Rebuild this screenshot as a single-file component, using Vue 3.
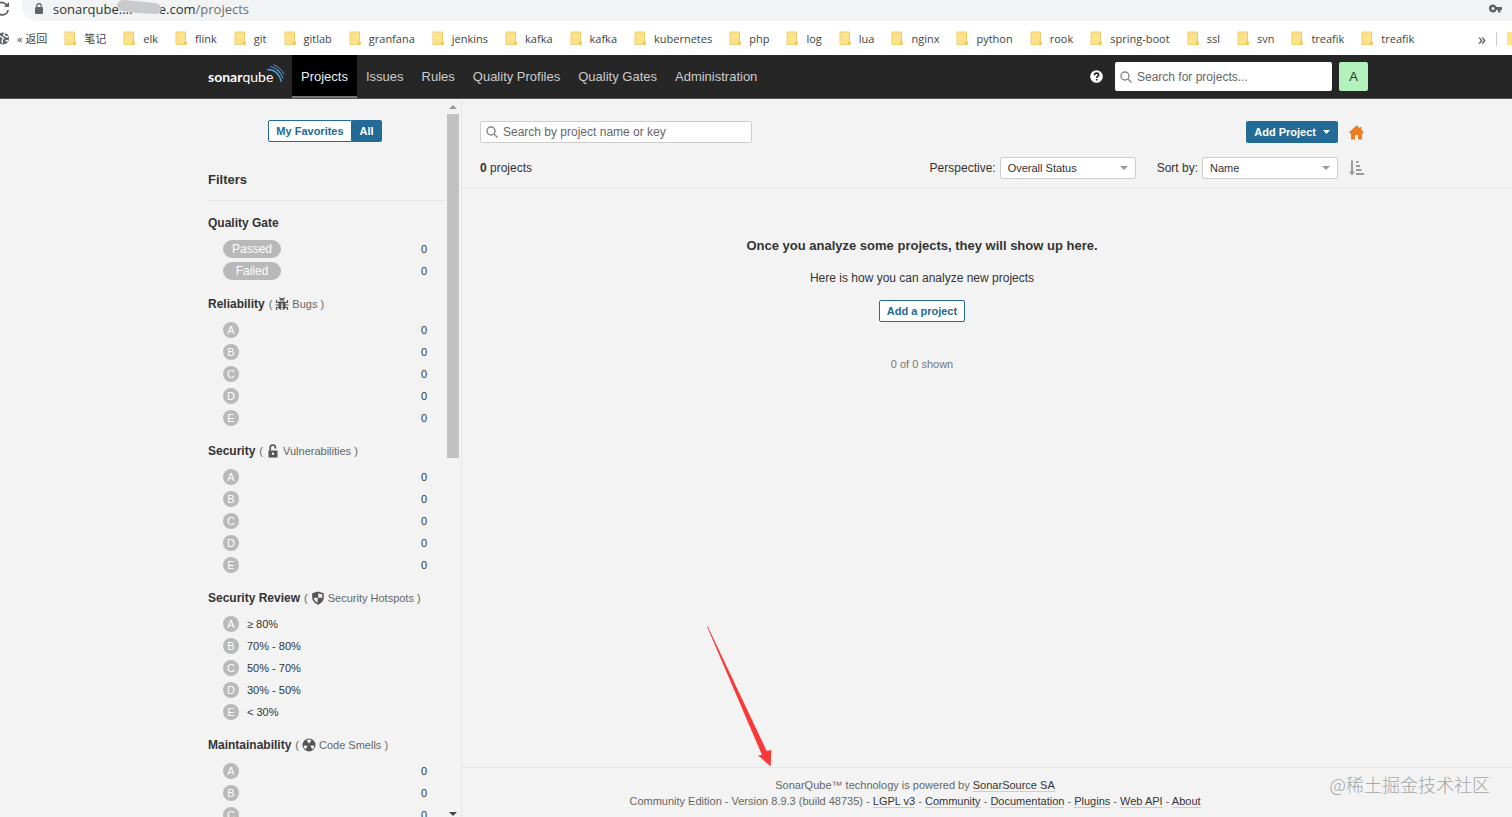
<script setup>
const bookmarks = [
  '笔记', 'elk', 'flink', 'git', 'gitlab', 'granfana', 'jenkins', 'kafka', 'kafka', 'kubernetes',
  'php', 'log', 'lua', 'nginx', 'python', 'rook', 'spring-boot', 'ssl', 'svn', 'treafik', 'treafik',
]
const tabs = ['Projects', 'Issues', 'Rules', 'Quality Profiles', 'Quality Gates', 'Administration']
const grades = ['A', 'B', 'C', 'D', 'E']
const counted = grades.map((grade) => ({ grade, text: '', count: '0' }))
const ranges = ['≥ 80%', '70% - 80%', '50% - 70%', '30% - 50%', '< 30%']
const facets = [
  { title: 'Reliability', icon: 'bug', metric: 'Bugs', rows: counted },
  { title: 'Security', icon: 'lock', metric: 'Vulnerabilities', rows: counted },
  {
    title: 'Security Review', icon: 'shield', metric: 'Security Hotspots',
    rows: grades.map((grade, i) => ({ grade, text: ranges[i], count: '' })),
  },
  { title: 'Maintainability', icon: 'smell', metric: 'Code Smells', rows: counted },
]
const footerLinks = ['LGPL v3', 'Community', 'Documentation', 'Plugins', 'Web API', 'About']
</script>

<template>
  <div class="window">
    <div class="address-bar">
      <svg class="reload" width="12" height="16" viewBox="0 0 12 16" fill="none" stroke="#5f6368" stroke-width="1.800">
        <path d="M-2 4A5.500 5.500 0 0 1 7 6M8 10A5.500 5.500 0 0 1-2 12.500" />
        <path d="M9 2v5H4z" fill="#5f6368" stroke="none" />
      </svg>
      <div class="url">
        <svg width="8" height="11" viewBox="0 0 8 11">
          <path d="M1.800 4V2.900a2.200 2.200 0 0 1 4.400 0V4" fill="none" stroke="#5f6368" stroke-width="1.200" />
          <rect y="4" width="8" height="7" rx="1" fill="#5f6368" />
        </svg>
        <span class="host">sonarqube<span class="hidden-part">....<svg class="smudge" width="46" height="16" viewBox="0 0 46 16"><path d="M0 5Q1 0 8 0L38 3Q44 4 44 9T38 14L20 13L5 11Q0 10 0 5z" fill="#c9cacb" /></svg></span>e.com<span class="path">/projects</span></span>
        <svg class="key" width="13" height="9" viewBox="0 0 13 9">
          <path d="M4 .5a4 4 0 1 0 3.600 5.500H9v2.500h2.500V6H13V3H7.600A4 4 0 0 0 4 .5zM4 3a1.500 1.500 0 1 1 0 3 1.500 1.500 0 0 1 0-3z" fill="#5f6368" fill-rule="evenodd" />
        </svg>
      </div>
    </div>

    <div class="bookmarks">
      <svg class="globe" width="9" height="13" viewBox="0 0 9 13">
        <circle cx="3" cy="6.500" r="6" fill="#5f6368" />
        <path d="M-1 3.500L1.500 5l2 1.500-1.500 2 .5 3M5 1L3.500 3l2 1.500L8 5M5.500 8.500L8 9" fill="none" stroke="#fff" stroke-width="1.300" />
      </svg>
      <a href="#" class="back">« 返回</a>
      <a v-for="(name, i) in bookmarks" :key="i" href="#" class="bookmark">
        <svg width="12" height="14" viewBox="0 0 12 14">
          <path d="M1 1h9.500v9l1 1v2.500H1z" fill="#fde28c" stroke="#f0cd6c" />
          <path d="M9 10.500h2V13H9z" fill="#f5c84c" />
        </svg>
        {{ name }}
      </a>
      <span class="more">»</span>
      <span class="divider"></span>
      <span class="cut-folder"></span>
    </div>

    <header class="navbar">
      <a href="#" class="logo"><b>sonar</b>qube
        <svg width="18" height="20" viewBox="0 0 18 20" fill="none" stroke="#4b9fd5">
          <path d="M0 5.500Q11 5 14.500 18" stroke-width="1.300" />
          <path d="M3 2.500Q12 3.500 16 14.500" stroke-width="1.100" />
          <path d="M6.500 .8Q13.500 3 17 10.500" stroke-width="1" />
        </svg>
      </a>
      <nav>
        <a v-for="(tab, i) in tabs" :key="tab" href="#" :class="{ active: i === 0 }">{{ tab }}</a>
      </nav>
      <button class="help" aria-label="Help">
        <svg width="13" height="13" viewBox="0 0 13 13">
          <circle cx="6.500" cy="6.500" r="6.300" fill="#fff" />
          <path d="M4.500 5.200c0-2.800 4.200-2.800 4.200-.3 0 1.500-2 1.400-2 3M6.700 9v1.600" fill="none" stroke="#222" stroke-width="1.700" />
        </svg>
      </button>
      <label class="search global">
        <svg width="12" height="12" viewBox="0 0 12 12" fill="none" stroke="#888" stroke-width="1.400"><circle cx="5" cy="5" r="4" /><path d="M8 8l3.500 3.500" /></svg>
        <input type="text" placeholder="Search for projects..." aria-label="Search for projects" />
      </label>
      <button class="avatar">A</button>
    </header>

    <div class="content">
      <aside class="sidebar">
        <div class="filters">
          <div class="toggle">
            <button>My Favorites</button><button class="on">All</button>
          </div>
          <h2>Filters</h2>
          <section class="facet">
            <h3>Quality Gate</h3>
            <ul>
              <li><span class="pill">Passed</span><span class="count">0</span></li>
              <li><span class="pill">Failed</span><span class="count">0</span></li>
            </ul>
          </section>
          <section v-for="facet in facets" :key="facet.title" class="facet">
            <h3>
              {{ facet.title }}
              <span class="metric">(
                <svg width="14" height="14" viewBox="0 0 14 14">
                  <g v-if="facet.icon === 'bug'">
                    <path d="M4.500 3.500a2.500 2.500 0 0 1 5 0z" fill="#555" />
                    <path d="M3.500 4.500h7V9a3.500 3.500 0 0 1-3 4V6.500h-1V13a3.500 3.500 0 0 1-3-4z" fill="#555" />
                    <path d="M4.500 .5l1.200 1.500M9.500 .5L8.300 2M1.500 3v2.500h11V3M.5 8h13M1.500 13v-2.500h11V13" fill="none" stroke="#555" stroke-width="1.200" />
                    <path d="M6.500 6.500h1V13h-1z" fill="#f3f3f3" />
                  </g>
                  <g v-else-if="facet.icon === 'lock'">
                    <path d="M4.200 6.500V3.600a2.600 2.600 0 0 1 5.200 0v.9" fill="none" stroke="#555" stroke-width="1.700" />
                    <path d="M2.500 6.500h9v7h-9zM7 8.500a1.300 1.300 0 1 0 .01 2.600A1.300 1.300 0 0 0 7 8.500z" fill="#555" fill-rule="evenodd" />
                  </g>
                  <g v-else-if="facet.icon === 'shield'">
                    <path d="M7 .5l5.800 1.700v4.300c0 3.500-3 6-5.800 7.200C4.200 12.500 1.200 10 1.200 6.500V2.200z" fill="#555" />
                    <path d="M7.300 2.300l4 1.100v3.400h-4zM6.700 6.800v5C4.500 10.700 3 9 2.800 6.800z" fill="#f3f3f3" />
                  </g>
                  <g v-else>
                    <circle cx="7" cy="7" r="6.500" fill="#555" />
                    <path d="M7 5.700L4.600 2.200a5 5 0 0 1 4.800 0zM5.800 7.700l-2.200 3.700A5 5 0 0 1 1.700 7.500zM8.200 7.700l2.200 3.700a5 5 0 0 0 1.900-3.900z" fill="#f3f3f3" />
                    <circle cx="7" cy="7" r="1.500" fill="#555" />
                  </g>
                </svg>
                {{ facet.metric }} )</span>
            </h3>
            <ul>
              <li v-for="row in facet.rows" :key="row.grade">
                <span class="grade">{{ row.grade }}</span>
                <span class="range">{{ row.text }}</span>
                <span class="count">{{ row.count }}</span>
              </li>
            </ul>
          </section>
        </div>
        <div class="scrollbar">
          <svg width="8" height="4" viewBox="0 0 8 4"><path d="M0 4l4-4 4 4z" fill="#999" /></svg>
          <div class="track"><div class="thumb"></div></div>
          <svg width="8" height="4" viewBox="0 0 8 4"><path d="M0 0l4 4 4-4z" fill="#444" /></svg>
        </div>
      </aside>

      <main>
        <div class="toolbar">
          <div class="line">
            <label class="search local">
              <svg width="12" height="12" viewBox="0 0 12 12" fill="none" stroke="#888" stroke-width="1.500"><circle cx="5" cy="5" r="4" /><path d="M8 8l3.500 3.500" /></svg>
              <input type="text" placeholder="Search by project name or key" aria-label="Search by project name or key" />
            </label>
            <button class="primary">Add Project
              <svg width="7" height="4" viewBox="0 0 7 4"><path d="M0 0h7L3.500 4z" fill="#fff" /></svg>
            </button>
            <button class="icon" aria-label="Homepage">
              <svg width="15" height="15" viewBox="0 0 15 15"><path d="M7.500 .3L10.800 3.300V2h1.600v2.800L15 7.500l-.8 1H13V14.500H9V10H6v4.500H2v-6H.8L0 7.500z" fill="#ed7d20" /></svg>
            </button>
          </div>
          <div class="line">
            <span class="total"><b>0</b> projects</span>
            <label for="perspective">Perspective:</label>
            <span class="select">
              <select id="perspective"><option>Overall Status</option></select>
              <svg width="8" height="4" viewBox="0 0 8 4"><path d="M0 0h8L4 4z" fill="#999" /></svg>
            </span>
            <label for="sort" class="sort-label">Sort by:</label>
            <span class="select">
              <select id="sort"><option>Name</option></select>
              <svg width="8" height="4" viewBox="0 0 8 4"><path d="M0 0h8L4 4z" fill="#999" /></svg>
            </span>
            <button class="icon" aria-label="Sort direction">
              <svg width="15" height="16" viewBox="0 0 15 16" fill="none" stroke="#999" stroke-width="2">
                <path d="M3 .5V13M7 2h2.500M7 6h4M7 10h5.500M7 14h8" /><path d="M0 11.500h6L3 15.500z" fill="#999" stroke="none" />
              </svg>
            </button>
          </div>
        </div>

        <div class="empty">
          <h1>Once you analyze some projects, they will show up here.</h1>
          <p>Here is how you can analyze new projects</p>
          <button class="outline">Add a project</button>
          <p class="shown">0 of 0 shown</p>
        </div>

        <footer>
          <svg class="arrow" width="65" height="142" viewBox="0 0 65 142"><path d="M0 .5L.8 .5 59.700 125l4.600-1-.6 16.500L51 129.300l4-.3z" fill="#fb3838" /></svg>
          <div>SonarQube™ technology is powered by <a href="#">SonarSource SA</a></div>
          <div>Community Edition - Version 8.9.3 (build 48735)<template v-for="link in footerLinks" :key="link"> - <a href="#">{{ link }}</a></template></div>
          <span class="watermark">@稀土掘金技术社区</span>
        </footer>
      </main>
    </div>
  </div>
</template>

<style>
body {
  margin: 0;
  overflow: hidden;
}
</style>

<style scoped>
* {
  box-sizing: border-box;
}
.window {
  display: flex;
  flex-direction: column;
  height: 100vh;
  background: #f3f3f3;
  color: #333;
  font: 12px/16px "Liberation Sans", Arial, sans-serif;
}
svg {
  display: block;
  flex: none;
}
a {
  color: inherit;
  text-decoration: none;
}
button,
input,
select {
  margin: 0;
  padding: 0;
  border: 0;
  background: none;
  color: inherit;
  font: inherit;
}
h1,
h2,
h3,
p,
ul {
  margin: 0;
  padding: 0;
  list-style: none;
}

.address-bar {
  display: flex;
  flex: none;
  height: 21px;
  background: #fff;
}
.url {
  display: flex;
  flex: 1;
  align-items: center;
  margin-left: 10px;
  padding: 0 10px 4px 13px;
  border-radius: 0 0 0 16px;
  background: #f1f3f4;
  color: #303134;
  font: 13px/16px "Open Sans", "Noto Sans", sans-serif;
}
.host {
  flex: 1;
  margin-left: 10px;
}
.hidden-part {
  display: inline-block;
  position: relative;
  width: 40px;
}
.smudge {
  position: absolute;
  left: -2px;
  top: -1px;
}
.path {
  color: #6b6f73;
}

.bookmarks {
  display: flex;
  flex: none;
  align-items: center;
  height: 34px;
  padding-top: 1px;
  background: #fff;
  color: #444;
  font: 11px/16px "Open Sans", "Noto Sans CJK SC", sans-serif;
  white-space: nowrap;
}
.back {
  margin-left: 8px;
}
.bookmark {
  display: flex;
  gap: 8px;
  margin-left: 17px;
}
.more {
  margin-left: auto;
  font-size: 16px;
}
.divider {
  width: 1px;
  height: 14px;
  margin: 0 10px;
  background: #ccc;
}
.cut-folder {
  width: 5px;
  height: 13px;
  background: #fde28c;
}

.navbar {
  display: flex;
  flex: none;
  align-items: center;
  height: 44px;
  padding: 0 144px 0 208px;
  border-bottom: 1px solid #555;
  background: #262626;
}
.logo {
  display: flex;
  align-items: center;
  width: 84px;
  color: #fff;
  font: 14px/20px Lato, sans-serif;
}
.logo svg {
  margin: -6px 0 0 -6px;
}
nav {
  display: flex;
  flex: 1;
  align-self: stretch;
}
nav a {
  padding: 0 9px;
  color: #ccc;
  font-size: 13px;
  line-height: 43px;
  white-space: nowrap;
}
nav .active {
  border-bottom: 2px solid #777;
  background: #000;
  color: #eee;
}
.help {
  margin-right: 12px;
}
.search {
  display: flex;
  align-items: center;
  gap: 5px;
  border-radius: 2px;
  background: #fff;
}
.search input {
  flex: 1;
  min-width: 0;
  outline: 0;
}
.search input::placeholder {
  color: #666;
  opacity: 1;
}
.global {
  width: 217px;
  height: 29px;
  padding: 0 5px;
}
.avatar {
  width: 29px;
  height: 29px;
  margin-left: 7px;
  border-radius: 2px;
  background: #b1f2bd;
  font-size: 13px;
}

.content {
  display: flex;
  flex: 1;
  min-height: 0;
}
.sidebar {
  display: flex;
  flex: none;
  width: 462px;
  padding-left: 208px;
  border-right: 1px solid #e6e6e6;
}
.filters {
  flex: 1;
  min-width: 0;
  overflow: hidden;
}
.toggle {
  display: flex;
  justify-content: center;
  margin: 21px 3px 28px 0;
}
.toggle button,
.outline {
  height: 22px;
  padding: 0 7px;
  border: 1px solid #236a97;
  border-radius: 2px 0 0 2px;
  background: #fff;
  color: #236a97;
  font-size: 11px;
  font-weight: bold;
}
.toggle .on {
  border-radius: 0 2px 2px 0;
  background: #236a97;
  color: #fff;
}
h2 {
  padding-bottom: 10px;
  border-bottom: 1px solid #e6e6e6;
  font-size: 13px;
  line-height: 20px;
}
.facet {
  margin-top: 12px;
}
.facet h3 {
  display: flex;
  align-items: center;
  gap: 4px;
  height: 20px;
  margin-bottom: 5px;
  font-size: 12px;
  white-space: nowrap;
}
.metric {
  display: flex;
  align-items: center;
  gap: 3px;
  color: #666;
  font-size: 11px;
  font-weight: normal;
}
.facet li {
  display: flex;
  align-items: center;
  height: 22px;
  padding: 0 18px 0 15px;
  font-size: 11px;
}
.pill,
.grade {
  border-radius: 9px;
  background: #b9b9b9;
  color: #fff;
  text-align: center;
}
.pill {
  width: 58px;
  font-size: 12px;
  line-height: 18px;
}
.grade {
  width: 16px;
  margin-right: 8px;
}
.count {
  margin-left: auto;
}
.scrollbar {
  display: flex;
  flex-direction: column;
  align-items: center;
  width: 16px;
  padding: 6px 0 1px;
}
.track {
  flex: 1;
  width: 12px;
  margin: 5px 0 10px;
}
.thumb {
  height: 50%;
  background: #c1c1c1;
}

main {
  display: flex;
  flex: 1;
  flex-direction: column;
  min-width: 0;
}
.toolbar {
  display: grid;
  gap: 14px;
  padding: 22px 148px 8px 18px;
  border-bottom: 1px solid #e6e6e6;
}
.line {
  display: flex;
  align-items: center;
}
.local {
  width: 272px;
  height: 22px;
  margin-right: auto;
  padding: 0 5px;
  border: 1px solid #ccc;
}
.primary {
  display: flex;
  align-items: center;
  gap: 7px;
  height: 22px;
  padding: 0 8px;
  border-radius: 2px;
  background: #236a97;
  color: #fff;
  font-size: 11px;
  font-weight: bold;
}
.icon {
  width: 15px;
  margin-left: 11px;
}
.total {
  margin-right: auto;
}
.sort-label {
  margin-left: 21px;
}
.select {
  display: flex;
  position: relative;
  align-items: center;
  width: 136px;
  height: 22px;
  margin-left: 4px;
  border: 1px solid #ccc;
  border-radius: 2px;
  background: #fff;
}
.select select {
  width: 100%;
  height: 100%;
  padding-left: 7px;
  appearance: none;
  font-size: 11px;
}
.select svg {
  position: absolute;
  right: 7px;
  pointer-events: none;
}

.empty {
  display: flex;
  flex: 1;
  flex-direction: column;
  align-items: center;
  padding: 50px 148px 0 18px;
}
h1 {
  margin-bottom: 16px;
  font-size: 13px;
  line-height: 16px;
}
.outline {
  margin: 14px 0 34px;
  border-radius: 2px;
}
.shown {
  color: #777;
  font-size: 11px;
}

footer {
  position: relative;
  padding: 9px 144px 8px 0;
  border-top: 1px solid #e6e6e6;
  color: #666;
  font-size: 11px;
  text-align: center;
}
footer a {
  border-bottom: 1px solid #ccc;
  color: #333;
}
.arrow {
  position: absolute;
  left: 245px;
  bottom: 100%;
}
.watermark {
  position: absolute;
  top: 4px;
  right: 22px;
  color: #a6a6a6;
  font: 300 18px/24px "Noto Sans CJK SC", sans-serif;
}
</style>
